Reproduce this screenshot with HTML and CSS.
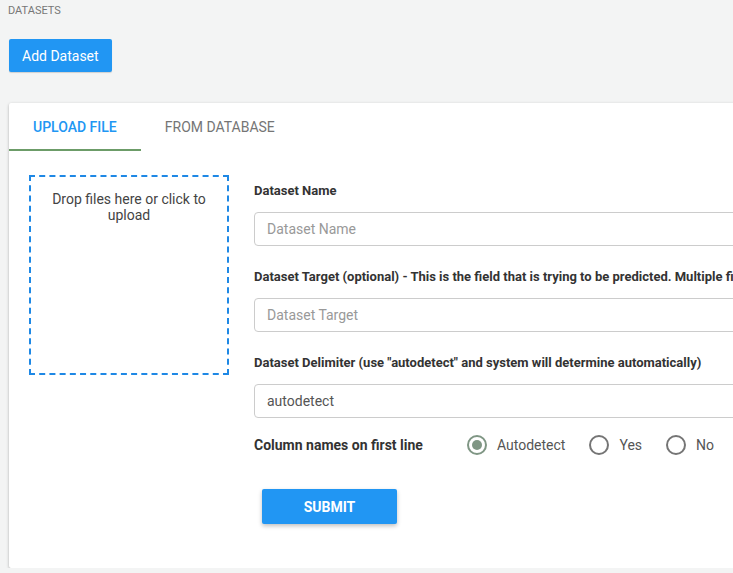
FILE: index.html
```html
<!DOCTYPE html>
<html lang="en">
<head>
    <meta charset="UTF-8">
    <meta name="viewport" content="width=device-width, initial-scale=1.0">
    <title>Datasets</title>
    <link rel="stylesheet" href="styles.css">
</head>
<body>
    <div class="page">
        <div class="page-title">DATASETS</div>

        <button class="btn-add">Add Dataset</button>

        <!-- Upload card -->
        <div class="card">
            <div class="tabs">
                <div class="tab active">UPLOAD FILE</div>
                <div class="tab">FROM DATABASE</div>
            </div>

            <div class="card-body">
                <div class="dropzone">Drop files here or click to upload</div>

                <form class="upload-form">
                    <label class="field-label">Dataset Name</label>
                    <input type="text" class="field-input" placeholder="Dataset Name">

                    <label class="field-label">Dataset Target (optional) - This is the field that is trying to be predicted. Multiple fields can be separated by commas</label>
                    <input type="text" class="field-input" placeholder="Dataset Target">

                    <label class="field-label">Dataset Delimiter (use "autodetect" and system will determine automatically)</label>
                    <input type="text" class="field-input" value="autodetect">

                    <div class="radio-row">
                        <span class="field-label inline">Column names on first line</span>
                        <label class="radio"><span class="radio-dot checked"></span>Autodetect</label>
                        <label class="radio"><span class="radio-dot"></span>Yes</label>
                        <label class="radio"><span class="radio-dot"></span>No</label>
                    </div>

                    <button type="button" class="btn-submit">SUBMIT</button>
                </form>
            </div>
        </div>
    </div>
</body>
</html>
```

FILE: styles.css
```css
body {
    font-family: Roboto, "Noto Sans", Arial, sans-serif;
    margin: 0;
    padding: 0;
    background-color: #f3f4f4;
    overflow: hidden;
}

.page {
    padding: 5px 0 0 9px;
    width: 1000px;
}

.page-title {
    font-size: 11px;
    line-height: 12px;
    color: #777;
    margin-left: -1px;
}

.btn-add {
    display: block;
    margin-top: 22px;
    height: 33px;
    padding: 0 13px;
    background-color: #2196f3;
    color: white;
    font-family: inherit;
    font-size: 14px;
    border: none;
    border-radius: 2px;
    box-shadow: 0 1px 1px rgba(0, 0, 0, 0.15);
}

.card {
    margin-top: 31px;
    width: 900px;
    height: 465px;
    background-color: white;
    box-shadow: 0 1px 3px rgba(0, 0, 0, 0.3);
    border-radius: 2px;
}

.tabs {
    display: flex;
    height: 48px;
}

.tab {
    padding: 0 24px;
    line-height: 48px;
    font-size: 14px;
    color: #757575;
}

.tab.active {
    color: #2196f3;
    font-weight: 500;
    border-bottom: 2px solid #6c9c68;
    height: 46px;
}

.card-body {
    display: flex;
    padding: 24px 0 0 20px;
}

.dropzone {
    width: 180px;
    height: 182px;
    flex-shrink: 0;
    border: 2px dashed #1e88e5;
    padding: 14px 8px 0;
    text-align: center;
    font-size: 14px;
    line-height: 16px;
    color: #444;
}

.upload-form {
    margin-left: 25px;
    width: 620px;
    padding-top: 8px;
}

.field-label {
    display: block;
    font-size: 13px;
    font-weight: 700;
    color: #333;
    white-space: nowrap;
    line-height: 15px;
    margin-bottom: 14px;
}

.field-input {
    display: block;
    box-sizing: border-box;
    width: 100%;
    height: 34px;
    padding: 0 12px;
    font-family: inherit;
    font-size: 14px;
    color: #555;
    border: 1px solid #ccc;
    border-radius: 4px;
    margin-bottom: 23px;
}

.field-input::placeholder {
    color: #999;
}

.radio-row {
    display: flex;
    align-items: center;
    margin-top: -8px;
    height: 24px;
}

.field-label.inline {
    margin: 0;
    width: 213px;
    font-size: 14px;
}

.radio {
    display: flex;
    align-items: center;
    font-size: 14px;
    color: #555;
    margin-right: 24px;
}

.radio-dot {
    box-sizing: border-box;
    width: 20px;
    height: 20px;
    border: 2px solid #757575;
    border-radius: 50%;
    margin-right: 10px;
    position: relative;
}

.radio-dot.checked {
    border-color: #7f9684;
}

.radio-dot.checked::after {
    content: "";
    position: absolute;
    top: 3px;
    left: 3px;
    width: 10px;
    height: 10px;
    border-radius: 50%;
    background-color: #7f9684;
}

.btn-submit {
    display: block;
    margin: 32px 0 0 8px;
    width: 135px;
    height: 35px;
    background-color: #2196f3;
    color: white;
    font-family: inherit;
    font-size: 14px;
    font-weight: 700;
    border: none;
    border-radius: 2px;
    box-shadow: 0 2px 4px rgba(0, 0, 0, 0.25);
}
```
